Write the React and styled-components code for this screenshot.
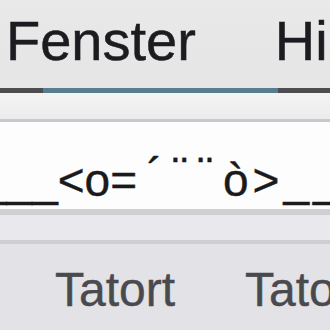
import React from 'react'
import styled, { createGlobalStyle } from 'styled-components'

const Global = createGlobalStyle`
    html, body {
        margin: 0;
        padding: 0;
        width: 330px;
        height: 330px;
        overflow: hidden;
        background: #e3e2e7;
        font-family: "Liberation Sans", Arial, sans-serif;
    }
`

const Window = styled.div`
    width: 330px;
    height: 330px;
    display: flex;
    flex-direction: column;
    overflow: hidden;
`

const MenuBar = styled.div`
    height: 88px;
    flex: none;
    display: flex;
    align-items: flex-start;
    gap: 79px;
    padding-left: 6px;
    background: linear-gradient(#e9e9e9, #e5e5e5);
    white-space: nowrap;
`

const MenuItem = styled.span`
    font-size: 56px;
    line-height: 1;
    padding-top: 13px;
    color: #1c1c20;
    -webkit-text-stroke: 0.5px #1c1c20;
`

const Progress = styled.div`
    height: 5px;
    flex: none;
    display: grid;
    grid-template-columns: 43px 235px 1fr;
    background: #4d4d4f;
`

const Fill = styled.div`
    grid-column: 2;
    background: #587d8e;
`

const Strip = styled.div`
    height: ${({ $h }) => $h}px;
    flex: none;
    background: ${({ $bg }) => $bg};
    border-bottom: ${({ $line }) => $line}px solid ${({ $lineColor }) => $lineColor};
`

const Field = styled.div`
    height: 93px;
    flex: none;
    box-sizing: border-box;
    background: #fdfdfd;
    border-bottom: 6px solid #d0d0d3;
    padding-top: 29px;
    white-space: nowrap;
    font-size: 46px;
    line-height: 46px;
    color: #1a1a1c;
    -webkit-text-stroke: 0.4px #1a1a1c;
`

const Lead = styled.span`
    margin-left: -19px;
`

const Accents = styled.span`
    margin-left: 10px;
    letter-spacing: 10px;
    vertical-align: 6px;
`

const Tail = styled.span`
    letter-spacing: 4px;
`

const Tabs = styled.div`
    flex: 1;
    display: flex;
    align-items: flex-start;
    gap: 70px;
    padding-left: 55px;
    padding-top: 22px;
    background: #e3e2e7;
    white-space: nowrap;
`

const Tab = styled.span`
    font-size: 48px;
    line-height: 1;
    color: #4a4a4e;
    -webkit-text-stroke: 0.4px #4a4a4e;
`

export default function App() {
    return (
        <Window>
            <Global />
            <MenuBar>
                <MenuItem>Fenster</MenuItem>
                <MenuItem>Hilfe</MenuItem>
            </MenuBar>
            <Progress>
                <Fill />
            </Progress>
            <Strip $h={26} $bg="linear-gradient(#f4f4f5, #ebebed)" $line={3} $lineColor="#c9c9cc" />
            <Field>
                <Lead>___&lt;o=</Lead>
                <Accents>´¨¨</Accents>
                <Tail>ò&gt;___</Tail>
            </Field>
            <Strip $h={25} $bg="#e9e8ec" $line={4} $lineColor="#cfced3" />
            <Tabs>
                <Tab>Tatort</Tab>
                <Tab>Tatort</Tab>
            </Tabs>
        </Window>
    )
}
